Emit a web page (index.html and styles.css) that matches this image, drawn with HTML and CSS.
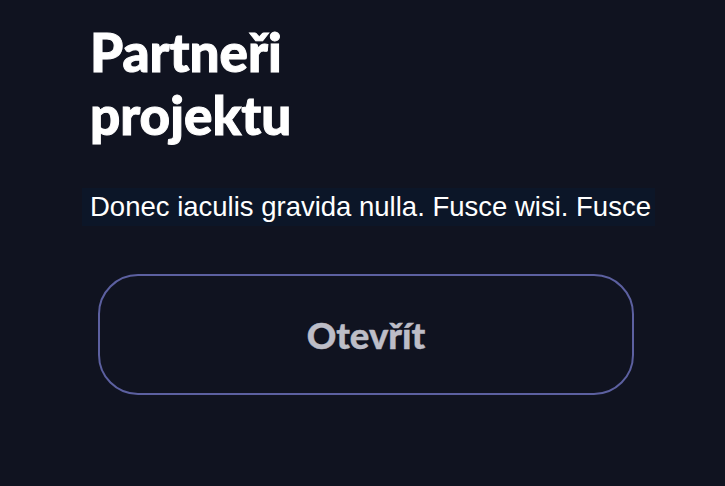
FILE: index.html
```html
<!DOCTYPE html>
<html lang="cs">
<head>
  <meta charset="UTF-8" />
  <meta name="viewport" content="width=device-width, initial-scale=1.0"/>
  <title>Partneři projektu</title>
  <link rel="stylesheet" href="styles.css">
</head>
<body>
  <section class="partners">
    <h2 class="partners-title">Partneři<br>projektu</h2>
    <p class="partners-text">Donec iaculis gravida nulla. Fusce wisi. Fusce</p>
    <button class="btn-open">Otevřít</button>
  </section>
</body>
</html>
```

FILE: styles.css
```css
:root {
  --background: #101320;
  --text: #fff;
  --border: #5c60a0;
}
body {
  background-color: var(--background);
  color: var(--text);
  margin: 0;
  padding: 0;
}
.partners {
  padding: 20px 0 0 90px;
  width: 565px;
}
.partners-title {
  font-family: Lato, sans-serif;
  font-weight: 900;
  font-size: 53px;
  line-height: 63px;
  -webkit-text-stroke: 1px #fff;
  margin: 0;
}
.partners-text {
  font-family: "Liberation Sans", Arial, sans-serif;
  font-size: 27.5px;
  line-height: 38px;
  margin: 42px 0 0 -8px;
  padding: 0 0 0 8px;
  background-color: #0c1628;
}
.btn-open {
  display: block;
  width: 536px;
  height: 121px;
  margin: 48px 0 0 8px;
  background: transparent;
  border: 2px solid var(--border);
  border-radius: 40px;
  color: #bdbdc7;
  font-family: Lato, sans-serif;
  font-weight: 900;
  font-size: 36.5px;
  -webkit-text-stroke: 0.4px #bdbdc7;
  cursor: pointer;
}
```
